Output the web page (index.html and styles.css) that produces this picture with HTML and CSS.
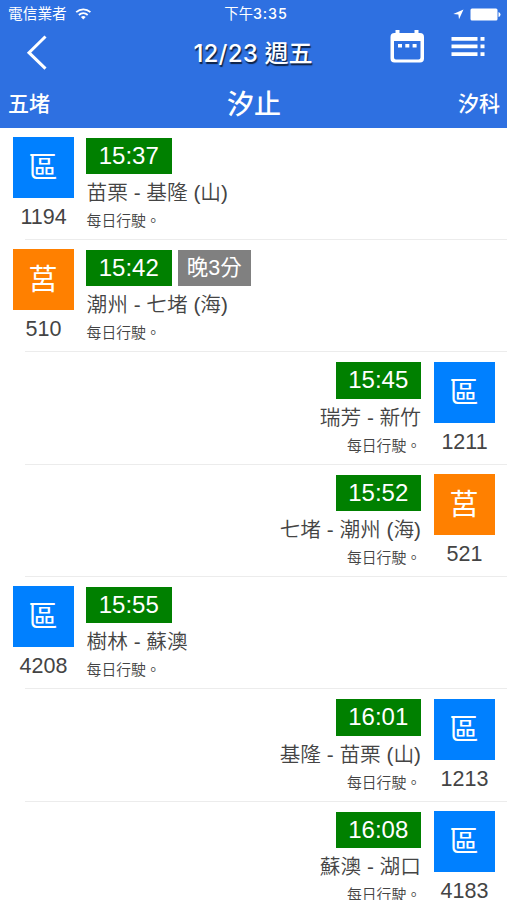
FILE: index.html
```html
<!DOCTYPE html>
<html lang="zh-Hant">
<head>
<meta charset="utf-8">
<title>汐止</title>
<link rel="stylesheet" href="styles.css">
</head>
<body>
<header class="header">
  <div class="status">
    <div class="carrier">電信業者
      <svg width="17" height="12" viewBox="0 0 17 12" fill="none" stroke="#fff" stroke-width="1.8"><path d="M1.2 4.2C5.3.3 11.3.3 15.4 4.2M3.9 7C6.4 4.6 10.2 4.6 12.7 7"/><path d="M5.9 8.9Q8.3 7 10.7 8.9L8.3 11.4Z" fill="#fff" stroke="none"/></svg>
    </div>
    <div class="clock">下午<span>3:35</span></div>
    <div class="power">
      <svg width="11" height="11" viewBox="0 0 11 11" fill="#fff"><path d="M10.5.5L6 10.3 5.4 5.4.3 5Z"/></svg>
      <svg width="31" height="13" viewBox="0 0 31 13" fill="#fff"><rect x=".5" y=".5" width="27" height="12" rx="1.5"/><path d="M28.5 4Q30.5 4.5 30.5 6.5T28.5 9Z"/></svg>
    </div>
  </div>
  <div class="navbar">
    <svg class="back" width="22" height="36" viewBox="0 0 22 36" fill="none" stroke="#fff" stroke-width="3"><path d="M19.5 1.5L3 17.7 19.5 33.7"/></svg>
    <h1><span>12/23</span> 週五</h1>
    <div class="actions">
      <svg width="34" height="34" viewBox="0 0 34 34" fill="#fff"><path fill-rule="evenodd" d="M5.5 1H9.5V4H24.5V1H28.5V4H30Q34 4 34 8V29.5Q34 33.500 30 33.500H4.500Q.5 33.500 .5 29.500V8Q.5 4 4.500 4H5.500ZM4 12V28.500Q4 30.500 6 30.500H28.500Q30.500 30.500 30.500 28.500V12Z"/><path d="M8 15h4v3.600H8zM15.300 15h4v3.600h-4zM22.600 15h4v3.600h-4z"/></svg>
      <svg width="34" height="21" viewBox="0 0 34 21" fill="#fff"><path d="M.5 1h26v3.700H.5zM.5 8.600h26v3.700H.5zM.5 16.200h26v3.700H.5zM29.500 1h4v3.700h-4zM29.500 8.600h4v3.700h-4zM29.500 16.200h4v3.700h-4z"/></svg>
    </div>
  </div>
  <nav class="stations"><span>五堵</span><strong>汐止</strong><span class="next">汐科</span></nav>
</header>
<main class="list">
  <article class="train"><div class="kind"><div class="tile">區</div><div class="number">1194</div></div><div class="info"><div class="times"><span class="time">15:37</span></div><div class="route">苗栗 - 基隆 (山)</div><div class="note">每日行駛。</div></div></article>
  <article class="train"><div class="kind"><div class="tile orange">莒</div><div class="number">510</div></div><div class="info"><div class="times"><span class="time">15:42</span><span class="late">晚3分</span></div><div class="route">潮州 - 七堵 (海)</div><div class="note">每日行駛。</div></div></article>
  <article class="train reverse"><div class="kind"><div class="tile">區</div><div class="number">1211</div></div><div class="info"><div class="times"><span class="time">15:45</span></div><div class="route">瑞芳 - 新竹</div><div class="note">每日行駛。</div></div></article>
  <article class="train reverse"><div class="kind"><div class="tile orange">莒</div><div class="number">521</div></div><div class="info"><div class="times"><span class="time">15:52</span></div><div class="route">七堵 - 潮州 (海)</div><div class="note">每日行駛。</div></div></article>
  <article class="train"><div class="kind"><div class="tile">區</div><div class="number">4208</div></div><div class="info"><div class="times"><span class="time">15:55</span></div><div class="route">樹林 - 蘇澳</div><div class="note">每日行駛。</div></div></article>
  <article class="train reverse"><div class="kind"><div class="tile">區</div><div class="number">1213</div></div><div class="info"><div class="times"><span class="time">16:01</span></div><div class="route">基隆 - 苗栗 (山)</div><div class="note">每日行駛。</div></div></article>
  <article class="train reverse"><div class="kind"><div class="tile">區</div><div class="number">4183</div></div><div class="info"><div class="times"><span class="time">16:08</span></div><div class="route">蘇澳 - 湖口</div><div class="note">每日行駛。</div></div></article>
</main>
</body>
</html>
```

FILE: styles.css
```css
* { box-sizing: border-box; }
body {
  margin: 0;
  height: 900px;
  overflow: hidden;
  background: #fff;
  color: #444;
  font-family: "Liberation Sans", "Noto Sans CJK TC", sans-serif;
}
svg { display: block; flex: none; }
.header {
  height: 127.500px;
  background: #2e70e1;
  color: #fff;
}
.status {
  height: 27px;
  padding: 0 6px 0 8px;
  display: grid;
  grid-template-columns: 1fr auto 1fr;
  align-items: center;
  font-size: 14.300px;
  line-height: 27px;
}
.carrier { display: flex; align-items: center; gap: 8px; font-size: 14.700px; }
.clock { padding-left: 3px; }
.clock span { font-family: Inter, sans-serif; font-weight: 500; letter-spacing: .9px; }
.power { display: flex; align-items: center; justify-content: flex-end; gap: 6px; }
.navbar {
  height: 50px;
  padding: 1px 22px 0 26px;
  display: grid;
  grid-template-columns: 1fr auto 1fr;
  align-items: center;
}
h1 {
  margin: 0;
  padding: 2px 5px 0 0;
  font-size: 24px;
  line-height: 46px;
  font-weight: 500;
  text-shadow: 1px 2px 1px rgba(0, 0, 0, .7);
}
h1 span { font-family: Inter, sans-serif; font-weight: 500; letter-spacing: .2px; }
.actions { display: flex; align-items: center; justify-content: flex-end; gap: 27px; padding-bottom: 13px; }
.stations {
  height: 50px;
  padding: 3px 7px 0 8px;
  display: grid;
  grid-template-columns: 1fr auto 1fr;
  align-items: center;
  font-size: 21px;
  line-height: 46px;
  font-weight: 500;
}
.stations strong { font-size: 27px; font-weight: 500; padding-top: 2px; }
.next { text-align: right; }
.train {
  height: 112.350px;
  padding: 9.500px 12.500px 0;
  display: flex;
  gap: 12.500px;
  background: linear-gradient(#ececec, #ececec) no-repeat 25px 100% / 100% 1px;
}
.reverse { flex-direction: row-reverse; text-align: right; }
.kind { width: 61px; text-align: center; }
.tile {
  height: 61px;
  padding-top: 1px;
  background: #0080ff;
  color: #fff;
  font-size: 29px;
  line-height: 60px;
}
.orange { background: #ff8000; }
.number { padding-left: 1px; font-size: 21.500px; line-height: 38px; }
.times { display: flex; gap: 6px; padding-top: .5px; }
.reverse .times { justify-content: flex-end; }
.time, .late { height: 36.500px; line-height: 36px; color: #fff; text-align: center; }
.time { width: 85.500px; background: #008000; font-size: 24px; }
.late { width: 73.500px; background: #808080; font-size: 21.500px; }
.route, .note { padding-left: .6px; font-weight: 350; }
.route { font-size: 20.700px; line-height: 37px; }
.note { font-size: 14.800px; line-height: 20px; }
```
